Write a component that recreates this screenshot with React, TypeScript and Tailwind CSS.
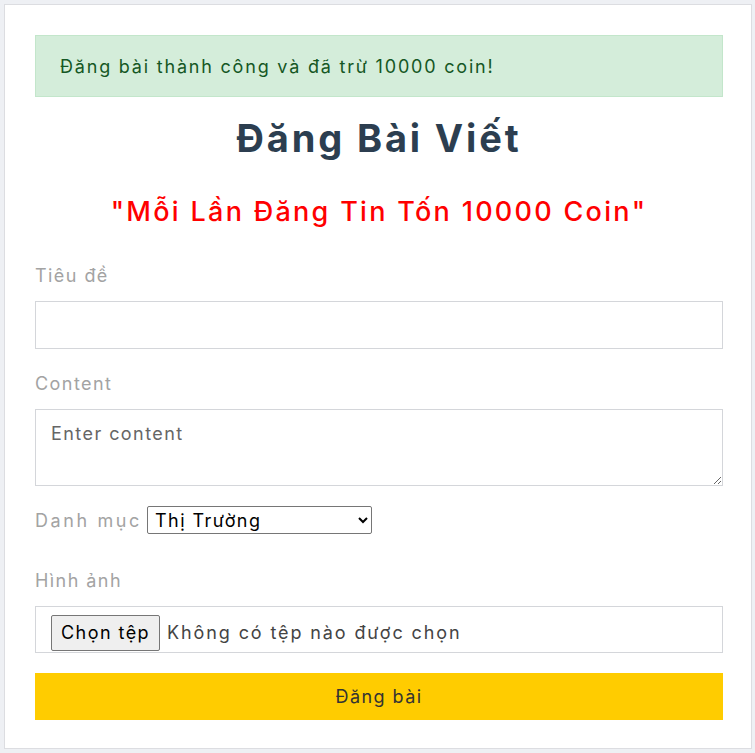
import React from "react";

export default function App() {
  return (
    <div
      className="min-h-[753px] bg-[#eef0f4] pt-[4px] pl-[4px]"
      style={{ fontFamily: "Inter, 'Noto Sans', sans-serif" }}
    >
      <div className="w-[748px] h-[745px] border border-[#dcdde1] bg-white pl-[30px] pr-[28px] pt-[30px] tracking-[0.09em]">
        <div className="h-[62px] border border-[#c3e6cb] bg-[#d4edda] text-[#155724] pl-[24px] flex items-center text-[18px] tracking-[0.1em]">
          Đăng bài thành công và đã trừ 10000 coin!
        </div>
        <h1 className="mt-[19px] h-[44px] leading-[44px] text-center font-bold text-[38px] tracking-[0.075em] text-[#2c3e50]">
          Đăng Bài Viết
        </h1>
        <p className="mt-[34px] h-[36px] leading-[36px] text-center font-medium text-[27px] tracking-[0.085em] text-[#ff0000]">
          "Mỗi Lần Đăng Tin Tốn 10000 Coin"
        </p>
        <form className="flex flex-col">
          <label className="mt-[34px] h-[24px] leading-[24px] text-[18px] text-[#a3a3a3]">
            Tiêu đề
          </label>
          <input
            type="text"
            className="mt-[13px] h-[48px] w-full border border-[#d4d6da] px-[15px] text-[18px] outline-none"
          />
          <label className="mt-[23px] h-[24px] leading-[24px] text-[18px] text-[#a3a3a3]">
            Content
          </label>
          <textarea
            placeholder="Enter content"
            className="mt-[13px] h-[77px] w-full border border-[#d4d6da] px-[15px] py-[10px] text-[18px] text-[#333] placeholder:text-[#666] outline-none"
          />
          <div className="mt-[20px] flex items-center gap-[5px]">
            <span className="text-[18px] text-[#a3a3a3] tracking-[0.145em]">Danh mục</span>
            <select className="h-[28px] w-[225px] border border-[#767676] rounded-[2px] bg-white text-[18px] text-black pl-[3px]">
              <option>Thị Trường</option>
            </select>
          </div>
          <label className="mt-[35px] h-[24px] leading-[24px] text-[18px] text-[#a3a3a3]">
            Hình ảnh
          </label>
          <div className="mt-[13px] h-[47px] w-full border border-[#d4d6da] flex items-center pl-[15px] pt-[6px] text-[18px] text-[#444]">
            <span className="h-[36px] px-[9px] flex items-center border border-[#767676] rounded-[2px] bg-[#efefef] text-black">
              Chọn tệp
            </span>
            <span className="ml-[7px] tracking-[0.105em]">Không có tệp nào được chọn</span>
          </div>
          <button
            type="button"
            className="mt-[20px] h-[47px] w-full bg-[#ffcc00] text-[18px] text-[#333]"
          >
            Đăng bài
          </button>
        </form>
      </div>
    </div>
  );
}
